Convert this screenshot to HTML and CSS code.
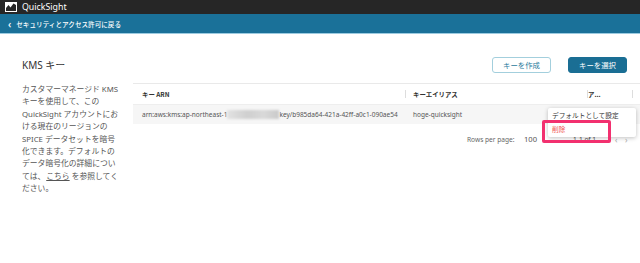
FILE: index.html
```html
<!DOCTYPE html>
<html lang="ja">
<head>
<meta charset="utf-8">
<title>QuickSight KMS</title>
<link rel="stylesheet" href="styles.css">
</head>
<body>
<header class="topbar">
  <svg class="logo" width="12" height="10" viewBox="0 0 12 10">
    <rect x="0" y="0" width="12" height="10" fill="#fff"/>
    <polygon points="1,9 1,6 3.5,3 5.5,5.5 8.5,1.5 11,3 11,9" fill="#262626"/>
  </svg>
  <span class="brand">QuickSight</span>
</header>
<nav class="subbar">
  <a class="back" href="#"><span class="chev">‹</span>セキュリティとアクセス許可に戻る</a>
</nav>
<main class="page">
  <aside class="side">
    <h1 class="title">KMS キー</h1>
    <p class="desc">カスタマーマネージド KMS キーを使用して、この QuickSight アカウントにおける現在のリージョンの SPICE データセットを暗号化できます。デフォルトのデータ暗号化の詳細につい<span>ては、</span><a class="link" href="#">こちら</a> <span>を参照してく</span><span>ださい。</span></p>
  </aside>
  <section class="content">
    <div class="actions">
      <button class="btn outline">キーを作成</button>
      <button class="btn primary">キーを選択</button>
    </div>
    <div class="table">
      <div class="row head">
        <div class="cell c1">キー ARN</div>
        <div class="cell c2">キーエイリアス</div>
        <div class="cell c3">ア...</div>
        <div class="cell c4"></div>
      </div>
      <div class="row body">
        <div class="cell c1 arn">arn:aws:kms:ap-northeast-1<span class="blur"></span>key/b985da64-421a-42ff-a0c1-090ae54</div>
        <div class="cell c2">hoge-quicksight</div>
        <div class="cell c3"></div>
        <div class="cell c4"></div>
      </div>
    </div>
    <div class="pager">
      <span class="rpp">Rows per page:</span>
      <span class="count">100</span>
      <span class="range">1-1 of 1</span>
      <span class="nav">‹</span>
      <span class="nav">›</span>
    </div>
  </section>
</main>
<div class="menu">
  <div class="item">デフォルトとして設定</div>
  <div class="item danger">削除</div>
</div>
<div class="highlight"></div>
</body>
</html>
```

FILE: styles.css
```css
* { box-sizing: border-box; }
html, body { margin: 0; padding: 0; background: #fff; }
body {
  font-family: "Noto Sans", "Noto Sans CJK JP", sans-serif;
  color: #444;
  width: 640px;
  height: 263px;
  overflow: hidden;
  position: relative;
}
.topbar {
  height: 14px;
  background: #262626;
  display: flex;
  align-items: center;
  padding-left: 5px;
  gap: 5px;
}
.logo { display: block; }
.brand { color: #fff; font-size: 8.8px; line-height: 14px; }
.subbar {
  height: 20px;
  background: #1a7199;
  border-bottom: 1px solid #9ccbe0;
  display: flex;
  align-items: center;
  padding-left: 8px;
}
.back {
  color: #fff;
  text-decoration: none;
  font-size: 6.6px;
  font-family: "Noto Sans CJK JP", sans-serif;
  font-weight: 500;
  display: flex;
  align-items: center;
}
.chev { font-size: 10px; margin-right: 5px; line-height: 10px; font-family: "Noto Sans", sans-serif; }
.page { display: flex; }
.side { width: 133px; padding: 24px 0 0 22px; }
.title {
  margin: 0;
  font-size: 10px;
  line-height: 14px;
  font-weight: 400;
  color: #333;
}
.desc {
  margin: 11px 0 0;
  width: 98.5px;
  font-size: 7.8px;
  line-height: 12.4px;
  color: #555;
  font-family: "Noto Sans", "Noto Sans CJK JP", sans-serif;
}
.link { color: #555; text-decoration: underline; font-family: "Noto Sans CJK JP", sans-serif; margin-left: 1px; }
.content { flex: 1; padding-top: 23px; }
.actions {
  display: flex;
  justify-content: flex-end;
  gap: 17px;
  padding-right: 13px;
}
.btn {
  height: 16px;
  width: 59px;
  border-radius: 3px;
  font-size: 7.4px;
  font-family: "Noto Sans CJK JP", sans-serif;
  padding: 0;
  line-height: 14px;
}
.outline { background: #fff; border: 1px solid #a3cfdd; color: #2b7a9c; }
.primary { background: #1a6e94; border: 1px solid #1a6e94; color: #fff; }
.table { margin-top: 10px; border-top: 1px solid #e9e9e9; }
.row { display: flex; height: 20px; align-items: center; }
.head { font-size: 6.4px; font-weight: 700; color: #333; font-family: "Noto Sans CJK JP", sans-serif; }
.body { background: #f6f6f6; border-top: 1px solid #eee; font-size: 6.5px; color: #555; }
.cell { white-space: nowrap; overflow: hidden; height: 100%; display: flex; align-items: center; }
.c1 { width: 272px; padding-left: 9px; }
.c2 { width: 182px; padding-left: 8px; }
.c3 { width: 45px; padding-left: 1px; }
.c4 { flex: 1; }
.head .c2, .head .c3, .head .c4 { position: relative; }
.head .c2::before, .head .c3::before, .head .c4::before {
  content: "";
  position: absolute;
  left: 0;
  top: 6px;
  height: 8px;
  border-left: 1px solid #ddd;
}
.blur {
  display: inline-block;
  width: 52px;
  height: 9px;
  background: linear-gradient(90deg, #e2e2e2, #cfcfcf 40%, #d9d9d9 70%, #cacaca);
  filter: blur(1.2px);
}
.pager {
  display: flex;
  align-items: center;
  height: 30px;
  padding-left: 334px;
  font-size: 6.6px;
  color: #666;
}
.rpp { width: 57px; }
.count { width: 49px; font-size: 7.6px; color: #555; }
.range { width: 42px; color: #555; }
.nav { width: 10px; font-size: 8px; color: #aaa; }
.menu {
  position: absolute;
  left: 548px;
  top: 108px;
  width: 88px;
  height: 29px;
  background: #fff;
  border-radius: 2px;
  box-shadow: 0 1px 4px rgba(0,0,0,0.25);
  padding-left: 4px;
  font-family: "Noto Sans CJK JP", sans-serif;
  font-size: 6.7px;
}
.item { height: 14px; line-height: 14px; color: #333; }
.danger { color: #ef4f4f; }
.highlight {
  position: absolute;
  left: 542px;
  top: 120px;
  width: 69px;
  height: 23px;
  border: 3px solid #f2306f;
  border-radius: 2px;
}
```
